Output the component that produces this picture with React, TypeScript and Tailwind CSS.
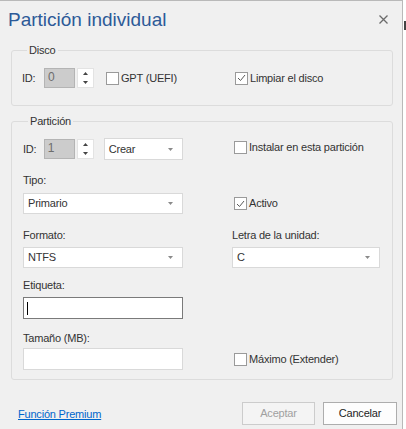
import React from "react";

const font = { fontFamily: '"Liberation Sans", Arial, sans-serif' };

const Arrow = () => (
  <svg width="5" height="3" viewBox="0 0 5 3" className="shrink-0">
    <path d="M0 0 L5 0 L2.5 3 Z" fill="#8a8a8a" />
  </svg>
);

const Select = ({ value, className }: { value: string; className: string }) => (
  <div
    className={`flex items-center justify-between bg-white border border-[#d9d9d9] pl-[4px] pr-[9px] ${className}`}
  >
    <span>{value}</span>
    <Arrow />
  </div>
);

const Check = ({ checked, label }: { checked?: boolean; label: string }) => (
  <div className="flex items-center gap-[2px]">
    <div className="w-[13px] h-[13px] border border-[#9a9a9a] bg-white flex items-center justify-center">
      {checked && (
        <svg width="9" height="8" viewBox="0 0 9 8">
          <path d="M1 4 L3.5 6.5 L8 1" stroke="#5a5a5a" strokeWidth="1" fill="none" />
        </svg>
      )}
    </div>
    <span>{label}</span>
  </div>
);

// spin box with disabled number and up/down arrows
const Spin = ({ value }: { value: string }) => (
  <div className="flex items-center h-[20px]">
    <div className="w-[31px] h-[20px] bg-[#cccccc] border border-[#b4b4b4] text-[#6d6d6d] pl-[3px] leading-[17px] text-[12px]">
      {value}
    </div>
    <div className="ml-[2px] w-[17px] h-[20px] bg-white border border-[#e3e3e3] flex flex-col items-center justify-between py-[3px]">
      <svg width="5" height="3" viewBox="0 0 5 3">
        <path d="M0 3 L5 3 L2.5 0 Z" fill="#444" />
      </svg>
      <svg width="5" height="3" viewBox="0 0 5 3">
        <path d="M0 0 L5 0 L2.5 3 Z" fill="#444" />
      </svg>
    </div>
  </div>
);

export default function App() {
  return (
    <div
      className="w-[406px] h-[429px] flex bg-white text-[11px] tracking-[-0.2px] text-[#333]"
      style={font}
    >
      <div className="w-[403px] h-full bg-[#f0f0f0] border-t border-r border-[#b9b9b9] flex flex-col">
        {/* header */}
        <div className="flex items-start justify-between pl-[8px] pr-[14px] pt-[7px]">
          <h1 className="text-[19px] leading-[24px] tracking-normal text-[#2d5a98]">
            Partición individual
          </h1>
          <svg width="9" height="9" viewBox="0 0 9 9" className="mt-[7px]">
            <path d="M0.5 0.5 L8.5 8.5 M8.5 0.5 L0.5 8.5" stroke="#6b6b6b" strokeWidth="1.3" />
          </svg>
        </div>

        {/* Disco */}
        <fieldset className="ml-[11px] w-[382px] mt-[11px] border border-[#dcdcdc] rounded-[3px] pl-[10px] pt-[11px] pb-[17px]">
          <legend className="ml-[5px] px-[2px] leading-[14px]">Disco</legend>
          <div className="flex items-center">
            <span className="w-[22px]">ID:</span>
            <Spin value="0" />
            <div className="ml-[12px] w-[129px]">
              <Check label="GPT (UEFI)" />
            </div>
            <Check checked label="Limpiar el disco" />
          </div>
        </fieldset>

        {/* Partición */}
        <fieldset className="ml-[11px] w-[382px] mt-[8px] border border-[#dcdcdc] rounded-[3px] pl-[11px] pt-[10px] pb-[9px]">
          <legend className="ml-[5px] px-[2px] leading-[14px]">Partición</legend>
          <div className="grid grid-cols-[160px_149px] gap-x-[49px]">
            <div className="flex items-center h-[22px]">
              <span className="w-[21px]">ID:</span>
              <Spin value="1" />
              <Select value="Crear" className="ml-[10px] w-[80px] h-[22px]" />
            </div>
            <div className="ml-[2px] pt-[1px]">
              <Check label="Instalar en esta partición" />
            </div>

            <div className="mt-[13px] leading-[14px]">Tipo:</div>
            <div />
            <Select value="Primario" className="mt-[6px] h-[21px]" />
            <div className="mt-[6px] ml-[2px] flex items-center">
              <Check checked label="Activo" />
            </div>

            <div className="mt-[14px] leading-[14px]">Formato:</div>
            <div className="mt-[14px] leading-[14px]">Letra de la unidad:</div>
            <Select value="NTFS" className="mt-[5px] h-[21px]" />
            <Select value="C" className="mt-[5px] h-[21px] w-[148px]" />

            <div className="mt-[10px] leading-[14px]">Etiqueta:</div>
            <div />
            <div className="mt-[5px] h-[22px] bg-white border border-[#7a7a7a] flex items-center pl-[3px]">
              <div className="w-[1px] h-[13px] bg-black" />
            </div>
            <div />

            <div className="mt-[12px] leading-[14px]">Tamaño (MB):</div>
            <div />
            <div className="mt-[3px] h-[22px] bg-white border border-[#d9d9d9]" />
            <div className="mt-[3px] ml-[2px] flex items-center">
              <Check label="Máximo (Extender)" />
            </div>
          </div>
        </fieldset>

        {/* footer */}
        <div className="flex items-center justify-between pl-[18px] pr-[5px] mt-[22px]">
          <a className="text-[#0066cc] underline leading-[14px]">Función Premium</a>
          <div className="flex gap-[8px]">
            <button className="w-[73px] h-[23px] border border-[#cccccc] bg-[#f4f4f4] text-[#a0a0a0]">
              Aceptar
            </button>
            <button className="w-[74px] h-[23px] border border-[#adadad] bg-[#fdfdfd] text-[#1e1e1e]">
              Cancelar
            </button>
          </div>
        </div>
      </div>
      <div className="w-[3px] pt-[21px]">
        <div className="ml-[1px] w-[2px] h-[9px] bg-[#444]" />
      </div>
    </div>
  );
}
